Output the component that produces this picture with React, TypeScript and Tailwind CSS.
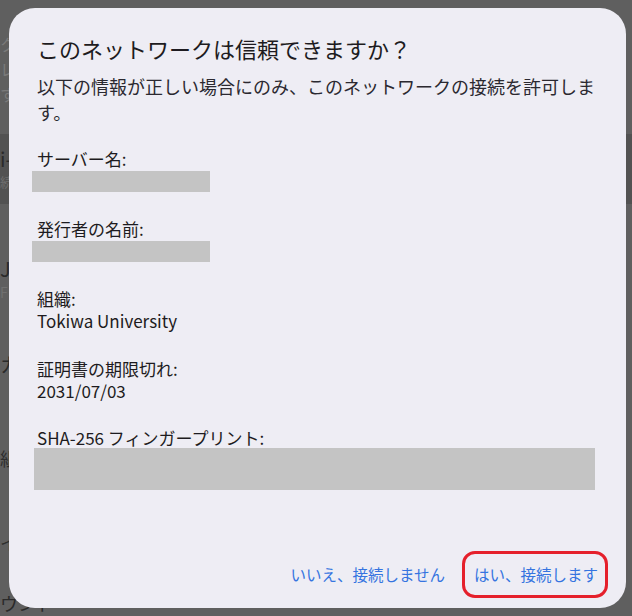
import React from 'react';

const font = '"Noto Sans CJK JP", "Noto Sans", sans-serif';

function Redacted({ className }: { className: string }) {
  return <div className={`bg-[#c4c4c4] ${className}`} />;
}

function Field({ label, value }: { label: string; value?: string }) {
  return (
    <div className="flex flex-col">
      <div className="text-[17px] leading-[22px] text-[#1d1b20]">{label}</div>
      {value ? (
        <div className="text-[17px] leading-[22px] text-[#1d1b20]">{value}</div>
      ) : (
        <Redacted className="-ml-[5px] mt-[1px] h-[21px] w-[178px]" />
      )}
    </div>
  );
}

export default function App() {
  return (
    <div className="relative w-[632px] h-[616px] overflow-hidden bg-[#5f5f5f]" style={{ fontFamily: font }}>
      {/* dimmed settings screen behind the dialog */}
      <div className="flex flex-col text-[17px] text-[#3b3b3b]">
        <div className="h-[22px]" />
        <div className="flex flex-col text-[16px] leading-[25px] text-[#7a7a7a] pt-[10px]">
          <span>ク</span>
          <span>レ</span>
          <span>す</span>
        </div>
        <div className="mt-[27px] h-[70px] bg-[#525252] flex flex-col justify-center">
          <span className="text-[20px] leading-[26px] text-[#2a2a2a]">i-</span>
          <span className="text-[13px] leading-[20px] text-[#6e6e6e]">続</span>
        </div>
        <div className="mt-[52px] flex flex-col">
          <span className="text-[20px] leading-[26px] text-[#2a2a2a]">J</span>
          <span className="text-[14px] leading-[20px] text-[#707070]">F</span>
        </div>
        <span className="mt-[51px] text-[20px] leading-[24px] text-[#2a2a2a]">カ</span>
        <span className="mt-[69px] text-[18px] leading-[24px] text-[#2e2e2e]">組</span>
        <span className="mt-[60px] text-[18px] leading-[24px] text-[#2e2e2e]">イ</span>
        <span className="mt-[37px] text-[18px] leading-[24px] text-[#2a2a2a]">ウンド</span>
      </div>

      {/* dialog */}
      <div className="absolute left-[9px] top-[8px] w-[617px] h-[600px] rounded-[26px] bg-[#eeedf4] flex flex-col pl-[28px] pr-[28px] pt-[25px] pb-[23px] text-[#1d1b20]">
        <h2 className="text-[22px] leading-[30px] font-normal">このネットワークは信頼できますか？</h2>
        <p className="mt-[10px] text-[18px] leading-[26px] text-[#2b2930]">
          以下の情報が正しい場合にのみ、このネットワークの接続を許可します。
        </p>

        <div className="mt-[23px] flex flex-col gap-[26px]">
          <Field label="サーバー名:" />
          <Field label="発行者の名前:" />
          <Field label="組織:" value="Tokiwa University" />
          <Field label="証明書の期限切れ:" value="2031/07/03" />
          <div className="-mt-[1px] flex flex-col">
            <div className="text-[17px] leading-[22px]">SHA-256 フィンガープリント:</div>
            <Redacted className="-ml-[3px] -mt-[1px] h-[42px] w-[561px]" />
          </div>
        </div>

        <div className="mt-auto flex justify-end items-center gap-[29px] text-[15.5px] leading-[22px] text-[#3574e0]">
          <button className="cursor-pointer">いいえ、接続しません</button>
          <button className="cursor-pointer">はい、接続します</button>
        </div>
      </div>

      {/* red annotation around the confirm button */}
      <div className="absolute left-[462px] top-[551px] w-[146px] h-[47px] rounded-[13px] border-[3px] border-[#e5202b]" />
    </div>
  );
}
